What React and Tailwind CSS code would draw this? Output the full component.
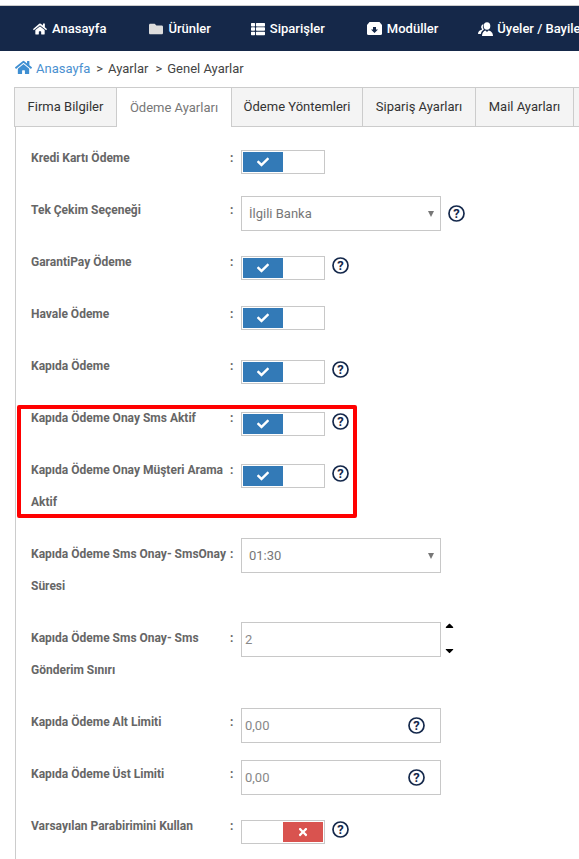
import React from 'react';
import { FaHome, FaFolder, FaThList, FaCheck, FaTimes, FaCaretUp, FaCaretDown } from 'react-icons/fa';

function HelpIcon({ className = '' }) {
  return (
    <svg width="17" height="17" viewBox="0 0 17 17" className={`shrink-0 ${className}`}>
      <circle cx="8.5" cy="8.5" r="7.5" fill="none" stroke="#14284b" strokeWidth="1.7" />
      <text x="8.5" y="13" textAnchor="middle" fontSize="13" fontWeight="700" fill="#14284b" fontFamily="Roboto, sans-serif">?</text>
    </svg>
  );
}

function ModuleIcon() {
  return (
    <svg width="15" height="13" viewBox="0 0 15 13">
      <path d="M2.500 0h10l2.500 3v8.500a1.500 1.500 0 0 1-1.500 1.500h-12A1.500 1.500 0 0 1 0 11.500V3z" fill="#fff" />
      <path d="M6 5h3v2.500h2L7.500 11 4 7.500h2z" fill="#152849" />
    </svg>
  );
}

function MembersIcon() {
  return (
    <svg width="15" height="14" viewBox="0 0 15 14" fill="#fff">
      <ellipse cx="9" cy="4" rx="3.300" ry="3.800" />
      <path d="M4 14c0-3.500 1.800-5 3.500-5.500L9 10l1.500-1.500C12.800 9 15 10.500 15 14z" />
      <path d="M5.500 2.200A2.800 2.800 0 0 0 4 7l-.2.800C1.800 8.300 0 9.500 0 12h2.800c.3-2 1.300-3.500 3-4.300A5 5 0 0 1 5.500 2.200z" />
    </svg>
  );
}

function Toggle({ on = true }) {
  return (
    <div className="w-[84px] h-[24px] border border-[#c8c8c8] p-[1px] flex shrink-0">
      {on ? (
        <div className="w-[40px] h-[20px] bg-[#337ab7] text-white flex items-center justify-center text-[12px]"><FaCheck /></div>
      ) : (
        <div className="ml-auto w-[40px] h-[20px] bg-[#d9534f] text-white flex items-center justify-center text-[12px]"><FaTimes /></div>
      )}
    </div>
  );
}

function SelectBox({ value }) {
  return (
    <div className="w-[200px] h-[35px] border border-[#c8c8c8] flex items-center justify-between pl-[7px] pr-[6px] text-[13px] text-[#777]">
      <span>{value}</span>
      <span className="w-0 h-0 border-x-[3.500px] border-x-transparent border-t-[6px] border-t-[#777]" />
    </div>
  );
}

function TextBox({ value, help }) {
  return (
    <div className="w-[200px] h-[35px] border border-[#c8c8c8] flex items-center justify-between pl-[3px] pr-[15px] text-[13px] text-[#888]">
      <span className="mt-[1px]">{value}</span>
      {help && <HelpIcon />}
    </div>
  );
}

function Row({ label, top, children }) {
  return (
    <div className="flex items-start">
      <div className="w-[200px] pb-[20px] font-bold text-[12px] leading-[32px] text-[#666]">{label}</div>
      <div className="w-[10px] leading-[32px] text-[12px] font-bold text-[#666] -ml-[1px]">:</div>
      <div className={`ml-[1px] flex items-center gap-[7px] ${top}`}>{children}</div>
    </div>
  );
}

const navItems = [
  { label: 'Anasayfa', icon: <FaHome className="text-[14px]" />, className: 'ml-[33px] gap-[5px]' },
  { label: 'Ürünler', icon: <FaFolder className="text-[14px] text-[#ddd]" />, className: 'ml-[43px] gap-[5px]' },
  { label: 'Siparişler', icon: <FaThList className="text-[14px]" />, className: 'ml-[40px] gap-[5px]' },
  { label: 'Modüller', icon: <ModuleIcon />, className: 'ml-[42px] gap-[5px]' },
  { label: 'Üyeler / Bayiler', icon: <MembersIcon />, className: 'ml-[40px] gap-[4px]' },
];

const tabs = [
  { label: 'Firma Bilgiler', w: 'w-[103px]' },
  { label: 'Ödeme Ayarları', w: 'w-[115px]', active: true },
  { label: 'Ödeme Yöntemleri', w: 'w-[131px]' },
  { label: 'Sipariş Ayarları', w: 'w-[113px]' },
  { label: 'Mail Ayarları', w: 'w-[98px]' },
  { label: '', w: 'w-[20px]' },
];

export default function App() {
  return (
    <div className="w-[579px] h-[859px] overflow-hidden bg-white text-[#333]" style={{ fontFamily: 'Roboto, sans-serif' }}>
      <div className="h-[6px] border-b-[1px] border-[#ccc]" />
      <nav className="h-[45px] bg-[#152849] text-white flex items-center text-[13px] font-medium whitespace-nowrap">
        {navItems.map(item => (
          <div key={item.label} className={`flex items-center shrink-0 ${item.className}`}>
            {item.icon}
            <span>{item.label}</span>
          </div>
        ))}
      </nav>

      <div className="h-[36px] pl-[15px] flex items-center text-[13px] text-[#444]">
        <FaHome className="text-[17px] text-[#3f8fd2] mr-[4px] -mt-[4px]" />
        <span className="text-[#4a90d0] mr-[6px]">Anasayfa</span>
        <span className="mr-[5px]">&gt;</span>
        <span className="mr-[7px]">Ayarlar</span>
        <span className="mr-[5px]">&gt;</span>
        <span>Genel Ayarlar</span>
      </div>

      <div className="ml-[14px] flex h-[40px] text-[13px] text-[#333]">
        {tabs.map(tab => (
          <div
            key={tab.w}
            className={`${tab.w} shrink-0 flex items-center justify-center border-t border-r border-[#ccc] ${tab.active ? 'bg-white text-[#777]' : 'bg-[#f4f4f4] border-b'} first:border-l`}
          >
            {tab.label}
          </div>
        ))}
      </div>

      <div className="ml-[15px] border-l border-[#ccc] pl-[15px] pt-[15px] h-[800px]">
        <Row label="Kredi Kartı Ödeme" top="mt-[8px]"><Toggle /></Row>
        <Row label="Tek Çekim Seçeneği" top="mt-[2px]"><SelectBox value="İlgili Banka" /><HelpIcon /></Row>
        <Row label="GarantiPay Ödeme" top="mt-[10px]"><Toggle /><HelpIcon className="-mt-[6px]" /></Row>
        <Row label="Havale Ödeme" top="mt-[8px]"><Toggle /></Row>
        <Row label="Kapıda Ödeme" top="mt-[10px]"><Toggle /><HelpIcon className="-mt-[6px]" /></Row>

        <div className="relative">
          <div className="absolute top-[3px] -left-[14px] w-[340px] h-[113px] border-[4px] border-[#ff0000] rounded-[2px] pointer-events-none" />
          <Row label="Kapıda Ödeme Onay Sms Aktif" top="mt-[10px]"><Toggle /><HelpIcon className="-mt-[6px]" /></Row>
          <Row label="Kapıda Ödeme Onay Müşteri Arama Aktif" top="mt-[10px]"><Toggle /><HelpIcon className="-mt-[6px]" /></Row>
        </div>

        <Row label="Kapıda Ödeme Sms Onay- SmsOnay Süresi" top="mt-0"><SelectBox value="01:30" /></Row>
        <Row label="Kapıda Ödeme Sms Onay- Sms Gönderim Sınırı" top="mt-0">
          <TextBox value="2" />
          <div className="-ml-[5px] flex flex-col justify-between h-[35px] text-[13px] text-black">
            <FaCaretUp className="-mt-[3px]" />
            <FaCaretDown />
          </div>
        </Row>
        <Row label="Kapıda Ödeme Alt Limiti" top="mt-[2px]"><TextBox value="0,00" help /></Row>
        <Row label="Kapıda Ödeme Üst Limiti" top="mt-[2px]"><TextBox value="0,00" help /></Row>
        <Row label="Varsayılan Parabirimini Kullan" top="mt-[10px]"><Toggle on={false} /><HelpIcon className="-mt-[6px]" /></Row>
      </div>
    </div>
  );
}
